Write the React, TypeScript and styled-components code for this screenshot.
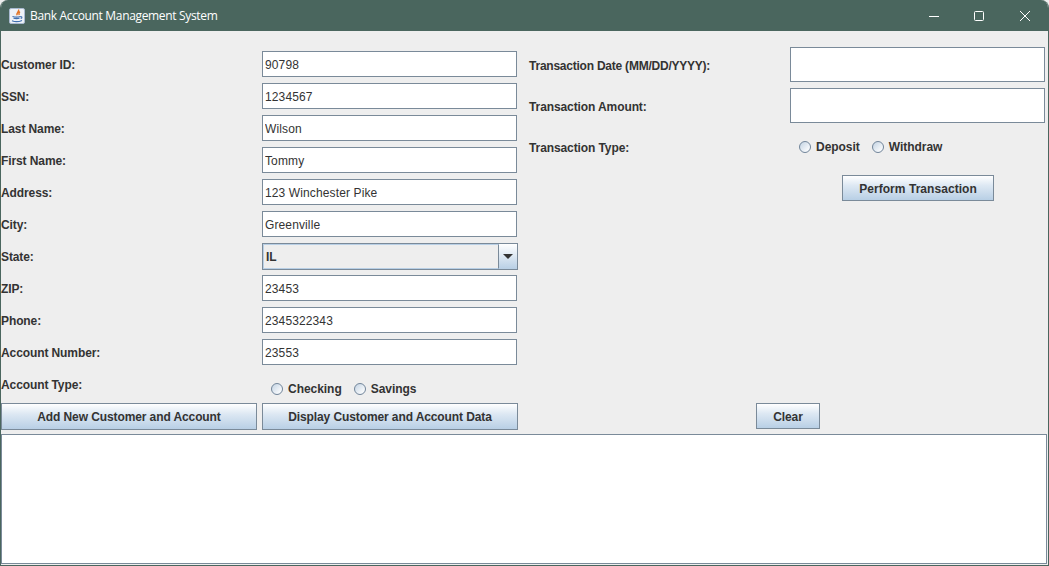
import React from "react";
import styled, { createGlobalStyle } from "styled-components";

const Global = createGlobalStyle`
  html, body {
    margin: 0;
    padding: 0;
    width: 1049px;
    height: 566px;
    overflow: hidden;
    background: #eeeeee;
  }
  * {
    box-sizing: border-box;
  }
`;

const Window = styled.div`
  width: 1049px;
  height: 566px;
  display: flex;
  flex-direction: column;
  background: #eeeeee;
  border-radius: 8px 8px 0 0;
  overflow: hidden;
  border-left: 1px solid #4a665e;
  border-right: 1px solid #4a665e;
  border-bottom: 1px solid #4a665e;
  font-family: "Liberation Sans", Arial, sans-serif;
  color: #333333;
`;

const TitleBar = styled.div`
  height: 31px;
  margin: 0 -1px;
  padding-right: 1px;
  flex: none;
  display: flex;
  align-items: center;
  background: #4a665e;
  color: #ffffff;
`;

const TitleIcon = styled.svg`
  width: 16px;
  height: 16px;
  margin-left: 9px;
  flex: none;
`;

const TitleText = styled.div`
  margin-left: 5px;
  flex: 1;
  font-family: "Open Sans", sans-serif;
  font-size: 12px;
  letter-spacing: -0.33px;
`;

const WinButton = styled.div<{ $w: number }>`
  width: ${(p) => p.$w}px;
  height: 31px;
  display: flex;
  align-items: center;
  justify-content: center;
`;

const Panels = styled.div`
  flex: none;
  height: 372px;
  display: grid;
  grid-template-columns: 528px 1fr;
`;

const LeftForm = styled.div`
  padding-top: 20px;
  display: flex;
  flex-direction: column;
  gap: 6px;
`;

const Row = styled.div`
  display: grid;
  grid-template-columns: 261px 255px;
  height: 26px;
  align-items: center;
`;

const Label = styled.label<{ $tight?: boolean }>`
  padding-top: 1px;
  font-size: 12px;
  font-weight: bold;
  letter-spacing: ${(p) => (p.$tight ? "-0.23px" : "-0.1px")};
  white-space: nowrap;
`;

const RightLabel = styled(Label)`
  padding-top: 3px;
`;

const TextField = styled.input<{ $tall?: boolean }>`
  width: 255px;
  height: ${(p) => (p.$tall ? "35px" : "26px")};
  padding: 2px 2px 0;
  border: 1px solid #7a8a99;
  outline: none;
  background: #ffffff;
  font-family: "Liberation Sans", Arial, sans-serif;
  font-size: 12px;
  letter-spacing: 0.12px;
  color: #333333;
`;

const Select = styled.div`
  width: 256px;
  height: 27px;
  margin-bottom: -1px;
  display: flex;
  border: 1px solid #7a8a99;
  background: #eeeeee;
`;

const SelectValue = styled.div`
  flex: 1;
  display: flex;
  align-items: center;
  padding-left: 2px;
  border: 1px solid #b8cfe5;
  border-right: 1px solid #7a8a99;
  font-size: 12px;
  font-weight: bold;
`;

const SelectArrow = styled.div`
  width: 18px;
  display: flex;
  align-items: center;
  justify-content: center;
  background: linear-gradient(#ffffff, #b8cfe5);
  &::after {
    content: "";
    border-left: 5px solid transparent;
    border-right: 5px solid transparent;
    border-top: 5px solid #333333;
  }
`;

const AccountTypeRow = styled.div`
  display: grid;
  grid-template-columns: 261px 255px;
  height: 26px;
`;

const AccountLabel = styled(Label)`
  padding-top: 7px;
`;

const RadioGroup = styled.div<{ $top: number }>`
  display: flex;
  align-items: center;
  gap: 12px;
  padding: ${(p) => p.$top}px 0 0 9px;
`;

const RadioItem = styled.div`
  display: flex;
  align-items: center;
  gap: 5px;
  font-size: 12px;
  font-weight: bold;
  letter-spacing: -0.04px;
`;

const RadioDot = styled.span`
  width: 12px;
  height: 12px;
  border-radius: 50%;
  border: 1px solid #71859a;
  background: linear-gradient(135deg, #c3d3e3, #f4f7fa 75%);
`;

const RightForm = styled.div`
  padding-top: 16px;
  display: flex;
  flex-direction: column;
`;

const RightRow = styled.div`
  display: grid;
  grid-template-columns: 261px 255px;
  align-items: center;
  margin-bottom: 6px;
`;

const RadioRow = styled(RightRow)`
  height: 35px;
  margin-bottom: 0;
`;

const ActionSlot = styled.div`
  padding: 11px 0 0 313px;
`;

const Button = styled.button<{ $w: number; $short?: boolean }>`
  display: block;
  width: ${(p) => p.$w}px;
  height: ${(p) => (p.$short ? "26px" : "27px")};
  padding: ${(p) => (p.$short ? "2px 0 0" : "0")};
  border: 1px solid #7a8a99;
  background: linear-gradient(#ffffff, #dde8f3 40%, #b8cfe5);
  font-family: "Liberation Sans", Arial, sans-serif;
  font-size: 12px;
  font-weight: bold;
  letter-spacing: -0.1px;
  color: #333333;
`;

const PerformButton = styled(Button)`
  letter-spacing: 0.05px;
`;

const ButtonBar = styled.div`
  flex: none;
  height: 27px;
  display: flex;
  align-items: flex-start;
`;

const DisplayButton = styled(Button)`
  margin-left: 5px;
`;

const ClearButton = styled(Button)`
  margin-left: 238px;
`;

const Output = styled.textarea`
  flex: none;
  width: 1046px;
  height: 130px;
  margin-top: 4px;
  border: 1px solid #7a8a99;
  outline: none;
  resize: none;
  background: #ffffff;
  display: block;
`;

function Radio(props: { label: string }) {
  return (
    <RadioItem>
      <RadioDot />
      {props.label}
    </RadioItem>
  );
}

const fields: [string, string][] = [
  ["Customer ID:", "90798"],
  ["SSN:", "1234567"],
  ["Last Name:", "Wilson"],
  ["First Name:", "Tommy"],
  ["Address:", "123 Winchester Pike"],
  ["City:", "Greenville"],
  ["State:", "IL"],
  ["ZIP:", "23453"],
  ["Phone:", "2345322343"],
  ["Account Number:", "23553"],
];

export default function App() {
  return (
    <Window>
      <Global />
      <TitleBar>
        <TitleIcon viewBox="0 0 16 16">
          <rect x="0.5" y="0.5" width="15" height="15" rx="1.5" fill="#eef2f8" stroke="#a9b9d0" />
          <path d="M9.5 1.5c1.2 2-2.4 3-1.4 5.8M11 3.6c-1.6 1-1.2 2.2-.8 3.4" fill="none" stroke="#e2762a" strokeWidth="1.4" />
          <path d="M3.5 8.4c2 .7 6 .7 8 0M4.5 10.2c1.6.5 4.4.5 6 0M3 12.8c2.6 1 7 1 10-.4M11.5 8.8c1.6-.6 2 1.2.2 1.8" fill="none" stroke="#3f6fb0" strokeWidth="1.1" />
        </TitleIcon>
        <TitleText>Bank Account Management System</TitleText>
        <WinButton $w={44}>
          <svg width="10" height="10" viewBox="0 0 10 10">
            <path d="M0 5.5h10" stroke="#fff" fill="none" />
          </svg>
        </WinButton>
        <WinButton $w={46}>
          <svg width="10" height="10" viewBox="0 0 10 10">
            <rect x="0.5" y="0.5" width="9" height="9" rx="1" stroke="#fff" fill="none" />
          </svg>
        </WinButton>
        <WinButton $w={46}>
          <svg width="10" height="10" viewBox="0 0 10 10">
            <path d="M0 0l10 10M10 0L0 10" stroke="#fff" fill="none" />
          </svg>
        </WinButton>
      </TitleBar>
      <Panels>
        <LeftForm>
          {fields.map(([label, value]) => (
            <Row key={label}>
              <Label>{label}</Label>
              {label === "State:" ? (
                <Select>
                  <SelectValue>{value}</SelectValue>
                  <SelectArrow />
                </Select>
              ) : (
                <TextField defaultValue={value} />
              )}
            </Row>
          ))}
          <AccountTypeRow>
            <AccountLabel>Account Type:</AccountLabel>
            <RadioGroup $top={10}>
              <Radio label="Checking" />
              <Radio label="Savings" />
            </RadioGroup>
          </AccountTypeRow>
        </LeftForm>
        <RightForm>
          <RightRow>
            <RightLabel $tight>Transaction Date (MM/DD/YYYY):</RightLabel>
            <TextField $tall />
          </RightRow>
          <RightRow>
            <RightLabel>Transaction Amount:</RightLabel>
            <TextField $tall />
          </RightRow>
          <RadioRow>
            <RightLabel>Transaction Type:</RightLabel>
            <RadioGroup $top={0}>
              <Radio label="Deposit" />
              <Radio label="Withdraw" />
            </RadioGroup>
          </RadioRow>
          <ActionSlot>
            <PerformButton $w={152} $short>Perform Transaction</PerformButton>
          </ActionSlot>
        </RightForm>
      </Panels>
      <ButtonBar>
        <Button $w={256}>Add New Customer and Account</Button>
        <DisplayButton $w={256}>Display Customer and Account Data</DisplayButton>
        <ClearButton $w={64} $short>Clear</ClearButton>
      </ButtonBar>
      <Output />
    </Window>
  );
}
